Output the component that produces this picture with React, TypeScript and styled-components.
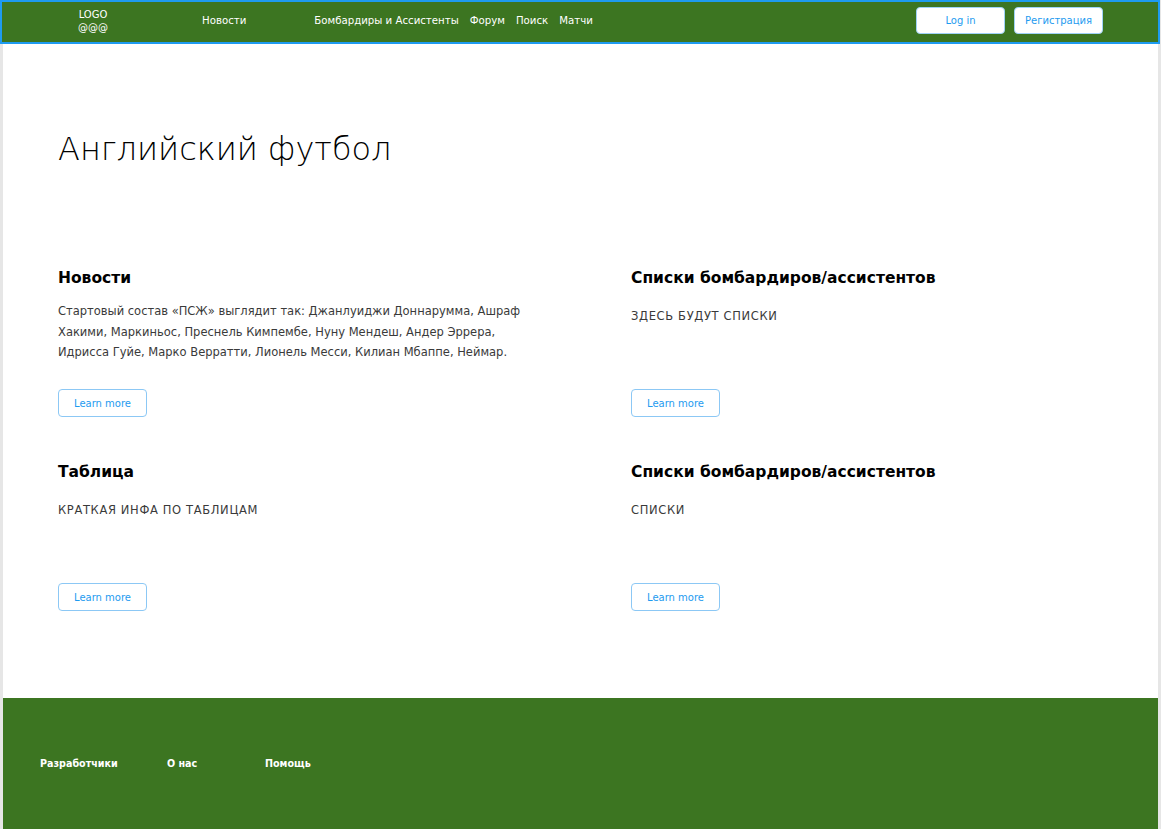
import React from "react";
import styled, { createGlobalStyle } from "styled-components";

const Global = createGlobalStyle`
  html, body { margin: 0; padding: 0; }
  body {
    background: #e6e6e6;
    font-family: "DejaVu Sans", "Noto Sans", sans-serif;
    color: #000;
  }
`;

const GREEN = "#3c7521";
const BLUE = "#1e9bf0";

const Page = styled.div`
  width: 1161px;
  height: 829px;
  overflow: hidden;
  display: flex;
  flex-direction: column;
`;

const Header = styled.header`
  box-sizing: border-box;
  width: 1160px;
  height: 44px;
  background: ${GREEN};
  border: 2px solid ${BLUE};
  display: flex;
  align-items: center;
  padding: 0 55px 3px 74px;
`;

const Logo = styled.div`
  width: 34px;
  color: #fff;
  font-size: 10px;
  line-height: 13px;
  text-align: center;
  margin-right: 92px;
`;

const Nav = styled.nav`
  display: flex;
  align-items: center;
  gap: 11px;
`;

const NavLink = styled.a<{ $wide?: boolean }>`
  color: #fff;
  font-size: 10.2px;
  text-decoration: none;
  margin-right: ${(p) => (p.$wide ? "57px" : "0")};
`;

const Auth = styled.div`
  margin-left: auto;
  display: flex;
  gap: 9px;
`;

const AuthButton = styled.button`
  box-sizing: border-box;
  width: 89px;
  height: 27px;
  background: #fff;
  border: 1px solid #9fd2f7;
  border-radius: 4px;
  color: ${BLUE};
  font-family: inherit;
  font-size: 10px;
  padding: 0;
`;

const Main = styled.main`
  flex: 1;
  margin: 0 3px;
  background: #fff;
  display: flex;
  flex-direction: column;
`;

const Content = styled.div`
  flex: 1;
  padding: 85px 0 0 55px;
`;

const Title = styled.h1`
  margin: 0 0 98px;
  font-size: 32px;
  font-weight: 300;
  line-height: 40px;
  color: #000;
`;

const Grid = styled.div`
  display: grid;
  grid-template-columns: 573px 500px;
  row-gap: 44px;
`;

const Card = styled.section`
  display: flex;
  flex-direction: column;
  height: 150px;
`;

const CardTitle = styled.h2`
  margin: 0 0 12px;
  font-size: 15.5px;
  font-weight: 700;
  line-height: 22px;
`;

const CardText = styled.p<{ $caps?: boolean }>`
  margin: ${(p) => (p.$caps ? "5px 0 0" : "0")};
  width: 480px;
  font-size: 11.5px;
  line-height: 20.5px;
  letter-spacing: ${(p) => (p.$caps ? "0.65px" : "0")};
  color: #3a3a3a;
  flex: 1;
`;

const LearnButton = styled.button`
  box-sizing: border-box;
  width: 89px;
  height: 28px;
  background: #fff;
  border: 1px solid #8cc8f5;
  border-radius: 4px;
  color: ${BLUE};
  font-family: inherit;
  font-size: 10px;
  padding: 0;
`;

const Footer = styled.footer`
  height: 131px;
  background: ${GREEN};
  display: flex;
  align-items: center;
  padding-left: 37px;
`;

const FooterLink = styled.a<{ $w: number }>`
  width: ${(p) => p.$w}px;
  color: #fff;
  font-size: 9.6px;
  font-weight: 700;
  text-decoration: none;
`;

const cards = [
  {
    title: "Новости",
    text: "Стартовый состав «ПСЖ» выглядит так: Джанлуиджи Доннарумма, Ашраф Хакими, Маркиньос, Преснель Кимпембе, Нуну Мендеш, Андер Эррера, Идрисса Гуйе, Марко Верратти, Лионель Месси, Килиан Мбаппе, Неймар.",
    caps: false,
  },
  { title: "Списки бомбардиров/ассистентов", text: "ЗДЕСЬ БУДУТ СПИСКИ", caps: true },
  { title: "Таблица", text: "КРАТКАЯ ИНФА ПО ТАБЛИЦАМ", caps: true },
  { title: "Списки бомбардиров/ассистентов", text: "СПИСКИ", caps: true },
];

export default function App() {
  return (
    <Page>
      <Global />
      <Header>
        <Logo>
          LOGO
          <br />
          @@@
        </Logo>
        <Nav>
          <NavLink $wide>Новости</NavLink>
          <NavLink>Бомбардиры и Ассистенты</NavLink>
          <NavLink>Форум</NavLink>
          <NavLink>Поиск</NavLink>
          <NavLink>Матчи</NavLink>
        </Nav>
        <Auth>
          <AuthButton>Log in</AuthButton>
          <AuthButton>Регистрация</AuthButton>
        </Auth>
      </Header>
      <Main>
        <Content>
          <Title>Английский футбол</Title>
          <Grid>
            {cards.map((c, i) => (
              <Card key={i}>
                <CardTitle>{c.title}</CardTitle>
                <CardText $caps={c.caps}>{c.text}</CardText>
                <LearnButton>Learn more</LearnButton>
              </Card>
            ))}
          </Grid>
        </Content>
        <Footer>
          <FooterLink $w={127}>Разработчики</FooterLink>
          <FooterLink $w={98}>О нас</FooterLink>
          <FooterLink $w={80}>Помощь</FooterLink>
        </Footer>
      </Main>
    </Page>
  );
}
